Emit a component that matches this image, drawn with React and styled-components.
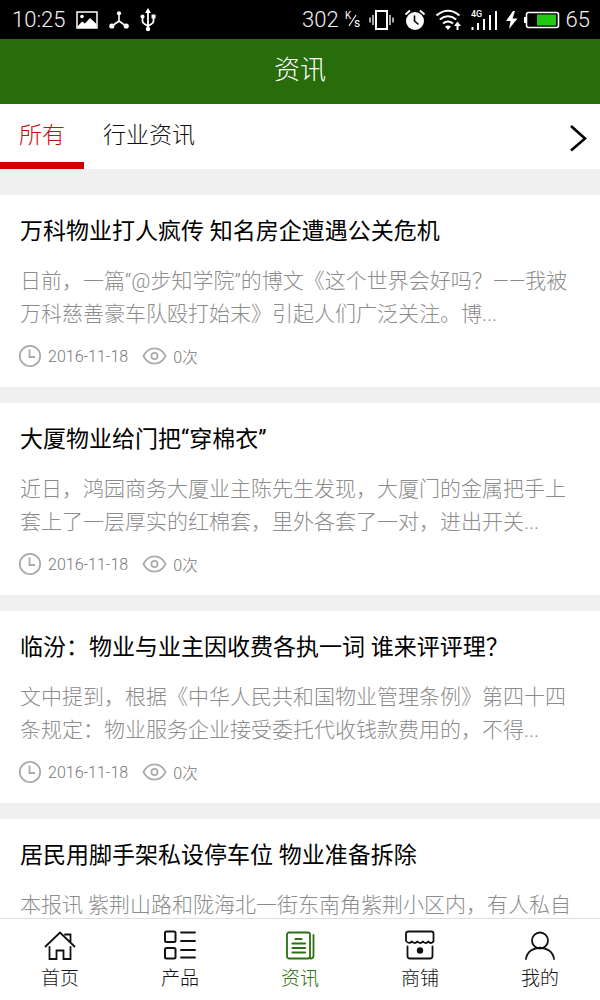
import React, { useState } from 'react';
import styled, { createGlobalStyle } from 'styled-components';

const GlobalStyle = createGlobalStyle`
  * {
    box-sizing: border-box;
  }
  body {
    margin: 0;
    background: #f0f0f0;
    font-family: Roboto, 'Noto Sans CJK SC', sans-serif;
    font-weight: 300;
  }
  button {
    margin: 0;
    padding: 0;
    border: none;
    background: none;
    font: inherit;
    color: inherit;
    cursor: pointer;
  }
`;

const Screen = styled.div`
  display: flex;
  flex-direction: column;
  height: 100vh;
  overflow: hidden;
`;

const StatusBar = styled.div`
  flex: none;
  display: flex;
  justify-content: space-between;
  align-items: center;
  height: 39px;
  padding: 0 10px 0 12px;
  background: #000;
  color: #f2f2f2;
  font-size: 22px;
`;

const StatusGroup = styled.div`
  display: flex;
  align-items: center;
  gap: ${({ $gap }) => $gap}px;

  svg {
    display: block;
    flex: none;
  }
`;

const Header = styled.header`
  flex: none;
  display: flex;
  justify-content: center;
  align-items: center;
  height: 65px;
  padding-bottom: 8px;
  background: #286c0b;
  color: #fff;
`;

const HeaderTitle = styled.h1`
  margin: 0;
  font-size: 26px;
  font-weight: 300;
`;

const TabBar = styled.div`
  flex: none;
  display: flex;
  height: 65px;
  background: #fff;
`;

const Tab = styled.button`
  && {
    padding: 0 19px;
    border-bottom: 7px solid ${({ $active }) => ($active ? '#d00000' : 'transparent')};
    color: ${({ $active }) => ($active ? '#d0090b' : '#111')};
    font-size: 23px;
  }
`;

const MoreButton = styled.button`
  && {
    display: flex;
    align-items: center;
    margin-left: auto;
    padding: 3px 12px 0;
  }
`;

const List = styled.main`
  flex: 1;
  min-height: 0;
  display: flex;
  flex-direction: column;
  gap: 16px;
  padding-top: 26px;
  overflow-y: auto;
  scrollbar-width: none;
`;

const Card = styled.article`
  flex: none;
  padding: 21px 20px 19px;
  background: #fff;
`;

const CardTitle = styled.h2`
  margin: 0 0 17px;
  color: #000;
  font-size: 23px;
  font-weight: 400;
  line-height: 32px;
`;

const Excerpt = styled.p`
  display: -webkit-box;
  margin: 0 0 13px;
  overflow: hidden;
  color: #8c8c8c;
  font-size: 21px;
  line-height: 33px;
  -webkit-box-orient: vertical;
  -webkit-line-clamp: 2;
`;

const Meta = styled.div`
  display: flex;
  align-items: center;
  gap: 14px;
  height: 24px;
  margin-left: -2px;
  color: #777;
  font-size: 16px;
`;

const MetaItem = styled.span`
  display: flex;
  align-items: center;
  gap: 6px;
`;

const NavBar = styled.nav`
  flex: none;
  display: grid;
  grid-template-columns: repeat(5, 1fr);
  height: 82px;
  border-top: 1px solid #ddd;
  background: #fff;
`;

const NavItem = styled.button`
  && {
    display: flex;
    flex-direction: column;
    align-items: center;
    gap: 2px;
    padding-top: 10px;
    color: ${({ $active }) => ($active ? '#2a700e' : '#111')};
    font-size: 19px;
    line-height: 28px;
  }
`;

const PictureIcon = () => (
  <svg width="22" height="18" viewBox="0 0 22 18">
    <rect x="1" y="1" width="20" height="16" fill="none" stroke="#fff" strokeWidth="1.5" />
    <circle cx="6" cy="5.5" r="1.8" fill="#fff" />
    <path d="M1.5 15.5 6 10.5 9 12.5 14 7 20.5 13V17H1.5z" fill="#fff" />
  </svg>
);

const ShareIcon = () => (
  <svg width="20" height="18" viewBox="0 0 20 18">
    <path d="M10 2v8L3 15M10 10l7 5" fill="none" stroke="#fff" strokeWidth="1.6" />
    <circle cx="10" cy="2.3" r="2.1" fill="#fff" />
    <circle cx="2.8" cy="15" r="2.6" fill="#fff" />
    <circle cx="17.2" cy="15" r="2.6" fill="#fff" />
  </svg>
);

const UsbIcon = () => (
  <svg width="16" height="24" viewBox="0 0 16 24">
    <path d="M8 3v18M2.5 8v5q0 2 2 3L8 18l3.5-2q2-1 2-3V8" fill="none" stroke="#fff" strokeWidth="1.8" />
    <path d="M8 0 11 5H5z" fill="#fff" />
    <circle cx="2.5" cy="8.5" r="2" fill="#fff" />
    <rect x="11.5" y="6.5" width="4" height="4" fill="#fff" />
    <circle cx="8" cy="21" r="2.2" fill="#fff" />
  </svg>
);

const SpeedUnit = () => (
  <svg width="17" height="20" viewBox="0 0 17 20" fill="#fff" fontFamily="Roboto, sans-serif" fontWeight="400">
    <text x="0" y="9" fontSize="10">K</text>
    <path d="M4 16 11 5" stroke="#fff" strokeWidth="1.1" />
    <text x="9" y="17" fontSize="12">s</text>
  </svg>
);

const VibrateIcon = () => (
  <svg width="30" height="22" viewBox="0 0 30 22" fill="none" stroke="#fff">
    <rect x="8" y="2" width="11" height="18" strokeWidth="2" />
    <path d="M5 6v10M22 6v10M2 8.5v5M25 8.5v5" strokeWidth="1.3" />
  </svg>
);

const AlarmIcon = () => (
  <svg width="26" height="22" viewBox="0 0 26 22">
    <circle cx="11" cy="12" r="9" fill="#fff" />
    <path d="M1.5 5.5 6 1.5M20.5 5.5 16 1.5" stroke="#fff" strokeWidth="2" />
    <path d="M10.5 6.5V12l4 3.500" fill="none" stroke="#000" strokeWidth="1.6" />
  </svg>
);

const WifiIcon = () => (
  <svg width="29" height="22" viewBox="0 0 29 22" fill="none" stroke="#fff" strokeWidth="2">
    <path d="M.5 6.5Q12 -3 23.5 6.500M3.8 10.5Q12 4 20.2 10.500M7 14.5q5-4 10 0" />
    <path d="m9 17.5 3 3.5 3-3.500q-3-2-6 0z" fill="#fff" stroke="none" />
    <path d="M21.5 21v-5" />
    <path d="M21.5 12.5 25 17h-7z" fill="#fff" stroke="none" />
  </svg>
);

const SignalIcon = () => (
  <svg width="28" height="22" viewBox="0 0 28 22">
    <text x="0" y="8" fill="#fff" fontSize="9" fontFamily="Roboto, sans-serif" fontWeight="500">4G</text>
    <path d="M1.5 21v-3M7 21v-7M13 21V10M19 21V6M25 21V2" stroke="#fff" strokeWidth="2" />
  </svg>
);

const BoltIcon = () => (
  <svg width="13" height="18" viewBox="0 0 13 18">
    <path d="M8 0 1 10h4.5L4 18l8.5-10.500H7.5L10 0z" fill="#fff" />
  </svg>
);

const BatteryIcon = () => (
  <svg width="36" height="18" viewBox="0 0 36 18">
    <rect x="2.5" y="1.5" width="32" height="15" rx="2" fill="none" stroke="#fff" strokeWidth="1.6" />
    <rect x="0" y="6" width="2" height="6" fill="#fff" />
    <rect x="13" y="3.5" width="19" height="11" fill="#22c914" />
  </svg>
);

const ArrowIcon = () => (
  <svg width="20" height="28" viewBox="0 0 20 28">
    <path d="m3 2 14 12.5L3 26.500" fill="none" stroke="#000" strokeWidth="2.6" />
  </svg>
);

const ClockIcon = () => (
  <svg width="24" height="24" viewBox="0 0 24 24" fill="none" stroke="#aaa" strokeWidth="1.8">
    <circle cx="12" cy="12" r="10.2" />
    <path d="M11.5 5.5v7.5H17" />
  </svg>
);

const EyeIcon = () => (
  <svg width="25" height="20" viewBox="0 0 26 20" fill="none" stroke="#aaa" strokeWidth="1.8">
    <path d="M1.5 10C7 -.5 19 -.5 24.5 10 19 20.5 7 20.5 1.5 10z" />
    <circle cx="13" cy="10" r="3.2" />
  </svg>
);

const NavSvg = ({ children }) => (
  <svg
    width="32"
    height="34"
    viewBox="0 0 32 34"
    fill="none"
    stroke="currentColor"
    strokeWidth="1.8"
    strokeLinecap="round"
    strokeLinejoin="round"
  >
    {children}
  </svg>
);

const HomeIcon = () => (
  <NavSvg>
    <path d="M1.5 17.5 16 3.5l14.5 14M21 5.500h5.500V13M5.5 18v12h7v-8.500h7V30h7V18" strokeLinejoin="miter" />
  </NavSvg>
);

const ProductIcon = () => (
  <NavSvg>
    <rect x="1" y="2.500" width="10.5" height="10.5" rx="1.5" strokeWidth="2" />
    <rect x="1" y="19" width="10.5" height="10.5" rx="1.5" strokeWidth="2" />
    <path d="M17 3.500h14M17 12h14M17 21h14M17 28.500h14" />
  </NavSvg>
);

const NewsIcon = () => (
  <NavSvg>
    <rect x="3" y="3.500" width="23" height="26" rx="2" />
    <path d="M29.5 6V27q0 2.500-3 2.500" />
    <path d="M11.5 10h6M8.5 14.500h12.500M8.5 19h12.500M8.5 23.500h12.500" strokeWidth="2.200" />
  </NavSvg>
);

const ShopIcon = () => (
  <NavSvg>
    <path d="M4.5 2.500h23q2 0 2 2v8q-3 3-5 0-3 3-5.500 0-3 3-5.500 0-3 3-5.500 0-3 3-6-.5V4.500q0-2 2.500-2z" />
    <path d="M3.5 17.500V27q0 2.500 2.500 2.500h20q2.500 0 2.500-2.500v-9.500" />
    <circle cx="16" cy="21.5" r="2.300" fill="currentColor" />
  </NavSvg>
);

const UserIcon = () => (
  <NavSvg>
    <circle cx="16" cy="11.5" r="8" />
    <path d="M2 30C4 15 28 15 30 30" />
  </NavSvg>
);

const tabs = ['所有', '行业资讯'];

const articles = [
  {
    title: '万科物业打人疯传 知名房企遭遇公关危机',
    excerpt: '日前，一篇“@步知学院”的博文《这个世界会好吗？——我被万科慈善豪车队殴打始末》引起人们广泛关注。博...',
    date: '2016-11-18',
    views: 0
  },
  {
    title: '大厦物业给门把“穿棉衣”',
    excerpt: '近日，鸿园商务大厦业主陈先生发现，大厦门的金属把手上套上了一层厚实的红棉套，里外各套了一对，进出开关...',
    date: '2016-11-18',
    views: 0
  },
  {
    title: '临汾：物业与业主因收费各执一词 谁来评评理？',
    excerpt: '文中提到，根据《中华人民共和国物业管理条例》第四十四条规定：物业服务企业接受委托代收钱款费用的，不得...',
    date: '2016-11-18',
    views: 0
  },
  {
    title: '居民用脚手架私设停车位 物业准备拆除',
    excerpt: '本报讯 紫荆山路和陇海北一街东南角紫荆小区内，有人私自'
  }
];

const navItems = [
  { label: '首页', Icon: HomeIcon },
  { label: '产品', Icon: ProductIcon },
  { label: '资讯', Icon: NewsIcon },
  { label: '商铺', Icon: ShopIcon },
  { label: '我的', Icon: UserIcon }
];

const Article = ({ title, excerpt, date, views }) => (
  <Card>
    <CardTitle>{title}</CardTitle>
    <Excerpt>{excerpt}</Excerpt>
    {date && (
      <Meta>
        <MetaItem>
          <ClockIcon />
          {date}
        </MetaItem>
        <MetaItem>
          <EyeIcon />
          {views}次
        </MetaItem>
      </Meta>
    )}
  </Card>
);

const App = () => {
  const [tab, setTab] = useState('所有');
  const [page, setPage] = useState('资讯');

  return (
    <Screen lang="zh-CN">
      <GlobalStyle />
      <StatusBar>
        <StatusGroup $gap={11}>
          <span>10:25</span>
          <PictureIcon />
          <ShareIcon />
          <UsbIcon />
        </StatusGroup>
        <StatusGroup $gap={6}>
          <span>302</span>
          <SpeedUnit />
          <VibrateIcon />
          <AlarmIcon />
          <WifiIcon />
          <SignalIcon />
          <BoltIcon />
          <BatteryIcon />
          <span>65</span>
        </StatusGroup>
      </StatusBar>

      <Header>
        <HeaderTitle>资讯</HeaderTitle>
      </Header>

      <TabBar>
        {tabs.map((name) => (
          <Tab key={name} type="button" $active={name === tab} onClick={() => setTab(name)}>
            {name}
          </Tab>
        ))}
        <MoreButton type="button" aria-label="更多">
          <ArrowIcon />
        </MoreButton>
      </TabBar>

      <List>
        {articles.map((article) => (
          <Article key={article.title} {...article} />
        ))}
      </List>

      <NavBar>
        {navItems.map(({ label, Icon }) => (
          <NavItem key={label} type="button" $active={label === page} onClick={() => setPage(label)}>
            <Icon />
            {label}
          </NavItem>
        ))}
      </NavBar>
    </Screen>
  );
};

export default App;
